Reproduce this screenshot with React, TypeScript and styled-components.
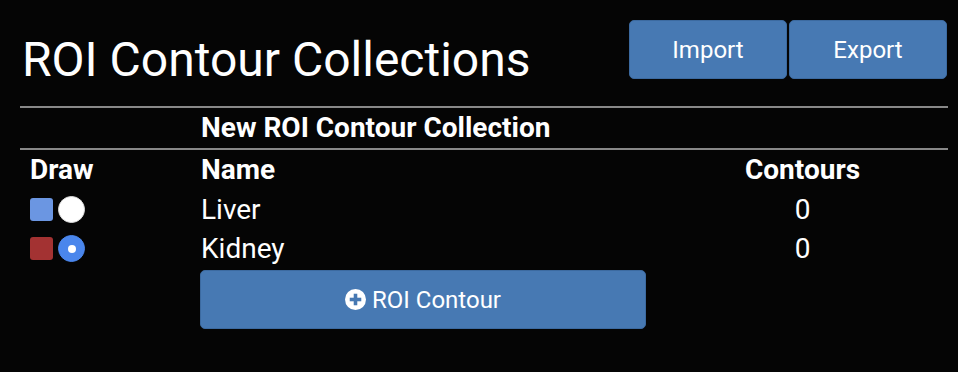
import styled, { createGlobalStyle } from "styled-components";

const GlobalStyle = createGlobalStyle`
  body {
    margin: 0;
    background: #050505;
    color: #fff;
    font-family: Roboto, "Liberation Sans", sans-serif;
  }
`

const Page = styled.div`
  padding: 20px 10px 0 20px;
`

const Header = styled.div`
  display: flex;
  flex-direction: row;
  justify-content: space-between;
  align-items: flex-start;
`

const Title = styled.h1`
  margin: 12px 0 0 2px;
  font-size: 48px;
  line-height: 56px;
  font-weight: 400;
`

const ButtonGroup = styled.div`
  display: flex;
  gap: 2px;
  margin-right: 1px;
`

const Button = styled.button<{ wide?: boolean }>`
  width: ${props => props.wide ? "100%" : "158px"};
  height: 59px;
  background: #4779b3;
  border: 1px solid #3c6aa0;
  border-radius: 5px;
  color: #fff;
  font-family: Roboto, "Liberation Sans", sans-serif;
  font-size: 24px;
  display: inline-flex;
  align-items: center;
  justify-content: center;
  gap: 6px;
`

const Divider = styled.div<{ top?: number }>`
  height: 2px;
  background: #888;
  margin-top: ${props => props.top ?? 0}px;
`

const Grid = styled.div`
  display: grid;
  grid-template-columns: 171px 466px 1fr;
`

const Cell = styled.div<{ bold?: boolean, center?: boolean, height?: number }>`
  height: ${props => props.height ?? 39}px;
  padding: 0 10px;
  font-size: 28px;
  line-height: ${props => props.height ?? 39}px;
  font-weight: ${props => props.bold ? 700 : 400};
  text-align: ${props => props.center ? "center" : "left"};
  display: flex;
  align-items: center;
  justify-content: ${props => props.center ? "center" : "flex-start"};
`

const Swatch = styled.span<{ color: string }>`
  width: 23px;
  height: 23px;
  border-radius: 3px;
  background: ${props => props.color};
`

const Radio = styled.span<{ checked?: boolean }>`
  margin-left: 5px;
  width: 27px;
  height: 27px;
  border-radius: 50%;
  box-sizing: border-box;
  background: ${props => props.checked ? "#4a86ec" : "#fff"};
  border: 1px solid ${props => props.checked ? "#4a86ec" : "#ddd"};
  display: inline-flex;
  align-items: center;
  justify-content: center;

  &::after {
    content: "";
    display: ${props => props.checked ? "block" : "none"};
    width: 8px;
    height: 8px;
    border-radius: 50%;
    background: #fff;
  }
`

const ButtonCell = styled.div`
  grid-column: 2;
  padding: 2px 11px 0 9px;
`

function PlusCircle() {
  return <svg width="21" height="21" viewBox="0 0 20 20">
    <circle cx="10" cy="10" r="10" fill="#fff" />
    <rect x="8.3" y="4.5" width="3.4" height="11" fill="#4779b3" />
    <rect x="4.5" y="8.3" width="11" height="3.4" fill="#4779b3" />
  </svg>
}

const contours = [
  { name: "Liver", color: "#6b96e2", selected: false, count: 0 },
  { name: "Kidney", color: "#a33232", selected: true, count: 0 },
]

export default function App() {
  return <>
    <GlobalStyle />
    <Page>
      <Header>
        <Title>ROI Contour Collections</Title>
        <ButtonGroup>
          <Button>Import</Button>
          <Button>Export</Button>
        </ButtonGroup>
      </Header>
      <Divider top={18} />
      <Grid>
        <Cell height={40} />
        <Cell bold height={40}>New ROI Contour Collection</Cell>
        <Cell height={40} />
      </Grid>
      <Divider />
      <Grid>
        <Cell bold height={40}>Draw</Cell>
        <Cell bold height={40}>Name</Cell>
        <Cell bold center height={40}>Contours</Cell>
        {contours.map(c => <>
          <Cell key={`draw-${c.name}`}>
            <Swatch color={c.color} />
            <Radio checked={c.selected} />
          </Cell>
          <Cell key={`name-${c.name}`}>{c.name}</Cell>
          <Cell key={`count-${c.name}`} center>{c.count}</Cell>
        </>)}
        <ButtonCell>
          <Button wide><PlusCircle />ROI Contour</Button>
        </ButtonCell>
      </Grid>
    </Page>
  </>
}
